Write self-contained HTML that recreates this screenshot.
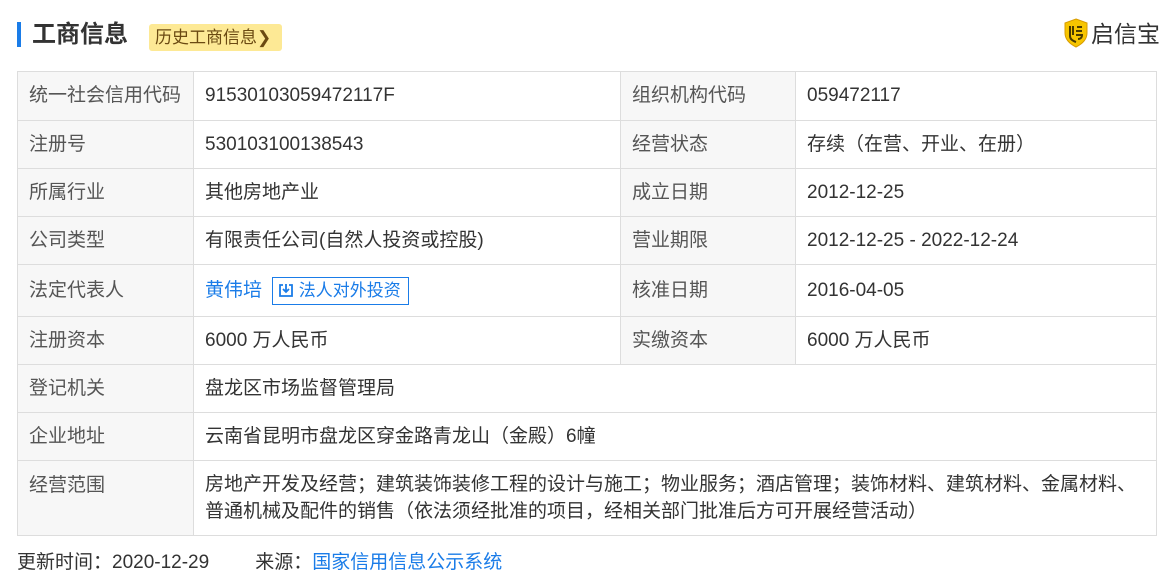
<!DOCTYPE html>
<html><head><meta charset="utf-8"><style>
*{margin:0;padding:0;box-sizing:border-box}
body{width:1174px;height:588px;background:#fff;font-family:"Liberation Sans","Noto Sans CJK SC",sans-serif;color:#333;position:relative;overflow:hidden}
.bar{position:absolute;left:17px;top:22px;width:4px;height:25px;background:#1a7ce8}
.title{position:absolute;left:32px;top:18px;font-size:24px;font-weight:bold;color:#333;line-height:34px}
.hist{position:absolute;left:149px;top:24px;height:27px;width:133px;background:#fde995;border-radius:3px;font-size:17px;color:#6b4a12;line-height:27px;padding-left:6px}
.logo{position:absolute;left:1064px;top:18px;font-size:23px;color:#333;line-height:32px}
.logo svg{vertical-align:-6px;margin-right:3px}
table{position:absolute;left:17px;top:71px;width:1140px;border-collapse:collapse;font-size:19px}
td{border:1px solid #ddd;padding:0 11px;vertical-align:middle;line-height:26px}
td span.n{display:inline-block;line-height:26px;vertical-align:middle;padding-top:2px}
td.k{background:#f7f7f7;color:#555;width:176px}
td.k2{background:#f7f7f7;color:#555;width:175px}
td.v1{width:427px}
a{color:#1a7ce8;text-decoration:none}
.btn{display:inline-block;border:1px solid #1a7ce8;color:#1a7ce8;font-size:17px;height:28px;line-height:26px;padding:0 7px 0 5px;margin-left:10px;vertical-align:middle}
.foot{position:absolute;left:17px;top:550px;font-size:19px;line-height:26px}
</style></head><body>
<div class="bar"></div>
<div class="title">工商信息</div>
<div class="hist">历史工商信息❯</div>
<div class="logo"><svg width="24" height="30" viewBox="0 0 24 30"><path d="M12 1 L23 5 V15 C23 22 18 26 12 29 C6 26 1 22 1 15 V5Z" fill="#f7c500" stroke="#d89c00"/><path d="M6 8 V18 C6 21 9 23 12 24 M9 8 V17 M13 9 H18 M12 13 H18 M12 17 H18 C18 20 16 21 14 21" stroke="#4a3a00" stroke-width="2" fill="none"/></svg>启信宝</div>
<table>
<tr style="height:49px"><td class="k">统一社会信用代码</td><td class="v1">91530103059472117F&#8203;</td><td class="k2">组织机构代码</td><td>059472117&#8203;</td></tr>
<tr style="height:48px"><td class="k">注册号</td><td>530103100138543&#8203;</td><td class="k2">经营状态</td><td>存续（在营、开业、在册）</td></tr>
<tr style="height:48px"><td class="k">所属行业</td><td>其他房地产业</td><td class="k2">成立日期</td><td>2012-12-25&#12288;</td></tr>
<tr style="height:48px"><td class="k">公司类型</td><td>有限责任公司(自然人投资或控股)</td><td class="k2">营业期限</td><td>2012-12-25 - 2022-12-24&#12288;</td></tr>
<tr style="height:52px"><td class="k">法定代表人</td><td><a>黄伟培</a><span class="btn"><svg width="16" height="16" viewBox="0 0 16 16" style="vertical-align:-2px"><path d="M5 3H2V14H14V3H11M8 2V10M5 7L8 10L11 7" stroke="#1a7ce8" stroke-width="1.8" fill="none"/></svg> 法人对外投资</span></td><td class="k2">核准日期</td><td>2016-04-05&#12288;</td></tr>
<tr style="height:48px"><td class="k">注册资本</td><td>6000 万人民币</td><td class="k2">实缴资本</td><td>6000 万人民币</td></tr>
<tr style="height:48px"><td class="k">登记机关</td><td colspan="3">盘龙区市场监督管理局</td></tr>
<tr style="height:48px"><td class="k">企业地址</td><td colspan="3">云南省昆明市盘龙区穿金路青龙山（金殿）6幢</td></tr>
<tr style="height:75px"><td class="k" style="vertical-align:top;padding-top:12px">经营范围</td><td colspan="3" style="line-height:27px;padding-top:0">房地产开发及经营；建筑装饰装修工程的设计与施工；物业服务；酒店管理；装饰材料、建筑材料、金属材料、普通机械及配件的销售（依法须经批准的项目，经相关部门批准后方可开展经营活动）</td></tr>
</table>
<div class="foot">更新时间：2020-12-29<span style="margin-left:46px">来源：</span><a>国家信用信息公示系统</a></div>
</body></html>
